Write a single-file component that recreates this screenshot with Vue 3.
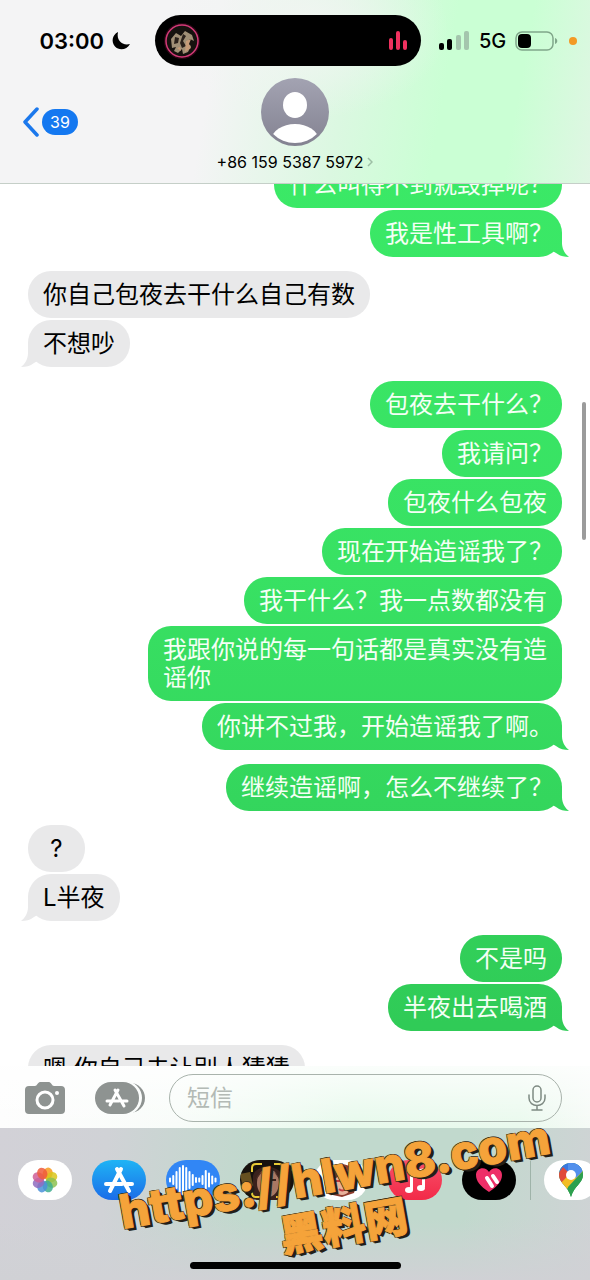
<script setup>
const groups = [
  { side: 'out', items: ['什么叫得不到就毁掉呢？', '我是性工具啊？'] },
  { side: 'in', items: ['你自己包夜去干什么自己有数', '不想吵'] },
  {
    side: 'out',
    items: [
      '包夜去干什么？',
      '我请问？',
      '包夜什么包夜',
      '现在开始造谣我了？',
      '我干什么？我一点数都没有',
      '我跟你说的每一句话都是真实没有造谣你',
      '你讲不过我，开始造谣我了啊。',
    ],
  },
  { side: 'out', items: ['继续造谣啊，怎么不继续了？'] },
  { side: 'in', items: ['?', 'L半夜'] },
  { side: 'out', items: ['不是吗', '半夜出去喝酒'] },
  { side: 'in', items: ['嗯 你自己去让别人猜猜'] },
]
const endsWithMark = (text) => /[？。]$/.test(text)

const petals = ['#f79a1e', '#d9c51c', '#8cc152', '#3fae8f', '#4a90d9', '#8e6cc0', '#cf5f96', '#ee5a3c']
const waves = [3, 8, 16, 24, 28, 24, 16, 10, 4, 3, 8, 18, 13, 7, 3]
</script>

<template>
  <div class="phone">
    <header class="top">
      <div class="status">
        <div class="clock">
          <span>03:00</span>
          <svg width="20" height="20" viewBox="0 0 20 20" aria-hidden="true">
            <path d="M7 1C1 4 0 11 4 15.500C8 20 16 19 19 13C12 15 5 10 7 1Z" />
          </svg>
        </div>
        <div class="island">
          <svg class="cover" width="38" height="38" viewBox="0 0 38 38" aria-hidden="true">
            <circle cx="19" cy="19" r="18" fill="#2a0614" />
            <circle cx="19" cy="19" r="16" fill="#16120f" stroke="#d33a78" stroke-width="1.500" />
            <path d="M8 17l5-6 5 3 4-5 7 4 2 6-4-2-3 4 4 3-3 6-5 2-1-5-4 4-4-2 2-4-4 1z" fill="#a08f76" />
            <path d="M12 15l4 1-1 5-4 1zM20 12l3 2-3 5 3 5-4 2-2-5z" fill="#2b211b" />
            <path d="M23 19l5-2-2 5 2 4-6 4zM14 26l3-1 1 4z" fill="#c69b78" />
          </svg>
          <svg class="bars" width="22" height="22" viewBox="0 0 22 22" aria-hidden="true">
            <path d="M4 10v8M11 3v15M18 12v6" stroke="#f0315f" stroke-width="4" stroke-linecap="round" />
          </svg>
        </div>
        <div class="radio">
          <svg width="31" height="20" viewBox="0 0 31 20" aria-hidden="true">
            <rect x="0" y="12" width="5" height="7" rx="2" />
            <rect x="8" y="8" width="5" height="11" rx="2" />
            <rect x="17" y="4" width="5" height="15" rx="2" fill="#a4c6ad" />
            <rect x="25" y="0" width="5" height="19" rx="2" fill="#a4c6ad" />
          </svg>
          <span>5G</span>
          <svg width="43" height="20" viewBox="0 0 43 20" aria-hidden="true">
            <rect x="1" y="1" width="37" height="18" rx="6" fill="none" stroke="#80a68a" stroke-width="1.500" />
            <rect x="3" y="3" width="13" height="14" rx="4" />
            <path d="M40 7c3 1 3 5 0 6z" fill="#80a68a" />
          </svg>
          <i class="dot"></i>
        </div>
      </div>
      <div class="contact">
        <button class="back" type="button" aria-label="返回，39 条未读">
          <svg width="18" height="30" viewBox="0 0 18 30" aria-hidden="true">
            <path d="M15 2L3 15L15 28" fill="none" stroke="#1b78ec" stroke-width="3.500" stroke-linecap="round" stroke-linejoin="round" />
          </svg>
          <span>39</span>
        </button>
        <button class="person" type="button">
          <svg width="68" height="68" viewBox="0 0 68 68" aria-hidden="true">
            <defs>
              <linearGradient id="face" x1="0" y1="0" x2="0" y2="1">
                <stop offset="0" stop-color="#a3a3b2" />
                <stop offset="1" stop-color="#838291" />
              </linearGradient>
              <clipPath id="disc"><circle cx="34" cy="34" r="31" /></clipPath>
            </defs>
            <circle cx="34" cy="34" r="34" fill="url(#face)" />
            <ellipse cx="34" cy="27" rx="12" ry="13" fill="#fff" />
            <ellipse cx="34" cy="61" rx="23" ry="15" fill="#fff" clip-path="url(#disc)" />
          </svg>
          <span class="number">
            +86 159 5387 5972
            <svg width="6" height="10" viewBox="0 0 6 10" aria-hidden="true">
              <path d="M1 1L5 5L1 9" fill="none" stroke="#9dbfa5" stroke-width="1.500" />
            </svg>
          </span>
        </button>
      </div>
    </header>

    <main class="chat">
      <section v-for="(group, g) in groups" :key="g" class="group" :class="group.side">
        <p v-for="(text, i) in group.items" :key="i" class="bubble" :class="{ mark: endsWithMark(text), tail: i === group.items.length - 1 }">{{ text }}</p>
      </section>
      <div class="scroll"></div>
    </main>

    <form class="composer" @submit.prevent>
      <button type="button" aria-label="相机">
        <svg width="42" height="34" viewBox="0 0 42 34" aria-hidden="true">
          <path d="M5 5h6c2 0 3-4 5-4h9c2 0 3 4 5 4h7a4 4 0 0 1 4 4v20a4 4 0 0 1-4 4H5a4 4 0 0 1-4-4V9a4 4 0 0 1 4-4z" fill="#8e9391" />
          <circle cx="21" cy="19" r="8" fill="none" stroke="#fff" stroke-width="3" />
          <circle cx="33" cy="12" r="2" fill="#fff" />
        </svg>
      </button>
      <button type="button" aria-label="应用">
        <svg width="51" height="34" viewBox="0 0 51 34" aria-hidden="true">
          <rect x="6" y="2" width="44" height="30" rx="15" fill="#8e9391" />
          <rect x="0" y="0" width="47" height="34" rx="17" fill="#fbfdfc" />
          <rect x="0" y="1" width="44" height="32" rx="16" fill="#8e9391" />
          <path d="M23 9L15 24M20 9L29 25M12 20H24M27 20H32" stroke="#fff" stroke-width="3" stroke-linecap="round" />
        </svg>
      </button>
      <label class="field">
        <input type="text" placeholder="短信" aria-label="短信" />
        <svg width="18" height="26" viewBox="0 0 18 26" fill="none" stroke="#7e8a83" stroke-width="1.500" stroke-linecap="round" aria-hidden="true">
          <rect x="5" y="1" width="8" height="16" rx="4" />
          <path d="M1 10v3c0 10 16 10 16 0v-3M9 21v4M4 25h10" />
        </svg>
      </label>
    </form>

    <footer class="dock">
      <nav class="apps">
        <button type="button" class="app white" aria-label="照片">
          <svg width="30" height="30" viewBox="0 0 30 30" aria-hidden="true">
            <ellipse v-for="(c, i) in petals" :key="c" cx="15" cy="8" rx="5" ry="6" :fill="c" fill-opacity="0.850" :transform="`rotate(${i * 45 + 22} 15 15)`" />
          </svg>
        </button>
        <button type="button" class="app store" aria-label="App Store">
          <svg width="32" height="28" viewBox="0 0 32 28" aria-hidden="true">
            <path d="M18 3L7 25M14 3L26 25M3 18H19M24 18H29" stroke="#fff" stroke-width="4" stroke-linecap="round" />
          </svg>
        </button>
        <button type="button" class="app audio" aria-label="音频">
          <svg width="50" height="32" viewBox="0 0 50 32" aria-hidden="true">
            <path v-for="(h, i) in waves" :key="i" :d="`M${i * 3.250 + 2} ${16 - h / 2}v${h}`" stroke="#fff" stroke-width="2" stroke-linecap="round" />
          </svg>
        </button>
        <button type="button" class="app memoji" aria-label="拟我表情">
          <svg width="54" height="40" viewBox="0 0 54 40" aria-hidden="true">
            <path d="M0 14l10-2 4 18-10 3z" fill="#665020" />
            <path d="M13 40V16c2-12 27-12 29 0v24z" fill="#3a211c" />
            <ellipse cx="28" cy="23" rx="11" ry="14" fill="#a97863" />
            <path d="M16 20C17 8 38 8 40 20L34 12H22z" fill="#4b2c24" />
            <path d="M21 20h5M31 20h5M25 30q3 2 6 0" stroke="#3b211c" stroke-width="2" />
            <path d="M12 12V8q0-4 4-4h6M34 4h5q4 0 4 4v4M12 29v4q0 4 4 4h4M36 37h4q3 0 3-4v-4" fill="none" stroke="#e8cb36" stroke-width="2" />
          </svg>
        </button>
        <button type="button" class="app white" aria-label="贴纸">
          <svg width="40" height="36" viewBox="0 0 40 36" aria-hidden="true">
            <path d="M7 32C3 8 10 2 20 2s19 8 13 29l-12 4z" fill="#8f3c2e" />
            <ellipse cx="21" cy="20" rx="10" ry="13" fill="#e8b29c" />
            <path d="M9 20C10 6 30 1 32 20L24 10z" fill="#70392d" />
            <path d="M15 19h4M24 19h4M18 27q3 3 7 0" stroke="#c23d43" stroke-width="2" fill="none" />
          </svg>
        </button>
        <button type="button" class="app music" aria-label="音乐">
          <svg width="30" height="30" viewBox="0 0 30 30" aria-hidden="true">
            <path d="M10 6L25 3V22H22V10L13 12V25H10Z" fill="#fff" />
            <ellipse cx="9" cy="25" rx="4" ry="3" fill="#fff" />
            <ellipse cx="21" cy="23" rx="4" ry="3" fill="#fff" />
          </svg>
        </button>
        <button type="button" class="app touch" aria-label="Digital Touch">
          <svg width="28" height="28" viewBox="0 0 28 28" aria-hidden="true">
            <path d="M14 26C5 20 1 15 1 9C1 1 11 0 14 6C17 0 27 1 27 9C27 15 23 20 14 26Z" fill="#ee2f68" />
            <path d="M12 12L17 20M18 10L22 16" stroke="#fff" stroke-width="4" stroke-linecap="round" />
          </svg>
        </button>
        <i class="rule"></i>
        <button type="button" class="app white" aria-label="地图">
          <svg width="26" height="36" viewBox="0 0 26 36" aria-hidden="true">
            <defs><clipPath id="pin"><path d="M13 1C5 1 1 7 1 13C1 21 10 24 13 35C16 24 25 21 25 13C25 7 21 1 13 1Z" /></clipPath></defs>
            <g clip-path="url(#pin)">
              <rect width="26" height="36" fill="#2da04f" />
              <path d="M0 0H26V5L13 14L5 7L0 12Z" fill="#3a78e0" />
              <path d="M0 12L5 5L13 13L3 24H0Z" fill="#e04a3a" />
              <path d="M2 22L19 4L26 10L8 28Z" fill="#f3bd24" />
              <path d="M10 0H26V8L18 16L10 8Z" fill="#5390ec" />
              <path d="M26 8V36H8L10 25Z" fill="#2da04f" />
            </g>
            <circle cx="13" cy="13" r="5" fill="#fff" />
          </svg>
        </button>
      </nav>
      <div class="home"></div>
      <div class="stamp">
        <span>https://hlwn8.com</span>
        <span class="second">黑料网</span>
      </div>
    </footer>
  </div>
</template>

<style>
body {
  margin: 0;
}
</style>

<style scoped>
.phone {
  height: 100vh;
  display: flex;
  flex-direction: column;
  overflow: hidden;
  background: #fff;
  color: #000;
  font-family: Inter, "Noto Sans CJK SC", sans-serif;
}
button {
  border: 0;
  padding: 0;
  background: none;
  color: inherit;
  font: inherit;
}
svg {
  display: block;
  flex: none;
}
.top {
  flex: none;
  border-bottom: 1px solid #c5cfc8;
  background:
    radial-gradient(ellipse 24% 50% at 52% 15%, #f1f5f2 0%, #f1f5f200 100%),
    linear-gradient(100deg, #f4f4f5 0%, #f4f4f5 36%, #dbf8e1 58%, #caffd4 74%, #caffd4 86%, #e0f6e4 100%);
}
.status {
  display: grid;
  grid-template-columns: minmax(0, 155fr) 266px minmax(0, 169fr);
  align-items: center;
  padding-top: 15px;
}
.clock {
  display: flex;
  align-items: center;
  justify-content: flex-end;
  gap: 7px;
  padding-right: 24px;
  font-size: 22px;
  font-weight: 600;
}
.island {
  display: flex;
  align-items: center;
  justify-content: space-between;
  height: 51px;
  padding: 0 12px 0 8px;
  box-sizing: border-box;
  border-radius: 26px;
  background: #000;
}
.radio {
  display: flex;
  align-items: center;
  gap: 9px;
  padding-left: 18px;
  font-size: 20px;
  font-weight: 500;
}
.dot {
  flex: none;
  width: 8px;
  height: 8px;
  margin-left: 2px;
  border-radius: 50%;
  background: #f39a25;
}
.contact {
  display: grid;
  grid-template-columns: 1fr auto 1fr;
  padding: 12px 0 11px;
}
.back {
  justify-self: start;
  align-self: start;
  display: flex;
  align-items: center;
  gap: 2px;
  margin: 29px 0 0 22px;
}
.back span {
  padding: 0 8px;
  border-radius: 13px;
  background: #1478f0;
  color: #fff;
  font-size: 16px;
  line-height: 26px;
}
.person {
  display: flex;
  flex-direction: column;
  align-items: center;
  gap: 6px;
}
.number {
  display: flex;
  align-items: center;
  gap: 4px;
  font-size: 16px;
  line-height: 20px;
}
.chat {
  position: relative;
  flex: 1;
  min-height: 0;
  overflow: hidden;
  display: flex;
  flex-direction: column;
  gap: 14px;
  padding: 0 28px;
}
.group {
  flex: none;
  display: flex;
  flex-direction: column;
  gap: 2px;
}
.group:first-child {
  margin-top: -23px;
}
.in {
  align-items: flex-start;
}
.out {
  align-items: flex-end;
}
.bubble {
  position: relative;
  box-sizing: border-box;
  min-width: 57px;
  max-width: 414px;
  margin: 0;
  padding: 10px 15px 9px;
  border-radius: 23px;
  background: #e9e9ea;
  font-size: 24px;
  line-height: 28px;
  text-align: center;
}
.out .bubble {
  background: linear-gradient(#3cec68, #38e163 45%, #30cb57 80%, #30c856) fixed;
  color: #f4fff5;
  text-align: left;
}
.out .mark {
  padding-right: 9px;
}
.tail::after {
  content: "";
  position: absolute;
  bottom: 0;
  right: -7px;
  width: 20px;
  height: 24px;
  background: inherit;
  clip-path: path("M13 0V10C13 16 16 21 20 24C15 24 11 23 7 20L0 16V0Z");
}
.in .tail::after {
  right: auto;
  left: -7px;
  clip-path: path("M7 0V10C7 16 4 21 0 24C5 24 9 23 13 20L20 16V0Z");
}
.scroll {
  position: absolute;
  top: 218px;
  right: 4px;
  width: 4px;
  height: 138px;
  border-radius: 2px;
  background: #9b9b9b;
}
.composer {
  flex: none;
  display: flex;
  align-items: center;
  padding: 8px 28px 6px 24px;
  background:
    linear-gradient(#ffffffcc, #ffffff00),
    linear-gradient(90deg, #fdfdfd 0%, #f8fcf9 30%, #e6f9eb 60%, #e9f9ed 88%, #f5faf6 100%);
}
.composer button + button {
  margin-left: 29px;
}
.field {
  flex: 1;
  min-width: 0;
  display: flex;
  align-items: center;
  height: 46px;
  margin-left: 23px;
  padding: 0 15px 0 17px;
  border: 1px solid #a9b3ac;
  border-radius: 24px;
}
.field input {
  flex: 1;
  min-width: 0;
  border: 0;
  padding: 0;
  outline: 0;
  background: none;
  font: inherit;
  font-size: 23px;
}
.field input::placeholder {
  color: #b3bab5;
  opacity: 1;
}
.dock {
  position: relative;
  flex: none;
  height: 152px;
  background:
    linear-gradient(#d0d1d500 60%, #d0d1d5 100%),
    linear-gradient(95deg, #d2d1d7 0%, #d0d2d6 18%, #c1d9cd 42%, #c1d9cd 78%, #cfd3d5 100%);
}
.apps {
  display: flex;
  gap: 20px;
  padding: 32px 0 0 18px;
  overflow: hidden;
}
.app {
  flex: none;
  display: flex;
  align-items: center;
  justify-content: center;
  width: 54px;
  height: 40px;
  border-radius: 20px;
  overflow: hidden;
}
.white {
  background: #fff;
}
.store {
  background: linear-gradient(#1fb4f5, #1b6ce8);
}
.audio {
  background: #3186f5;
}
.memoji {
  background: #17120e;
}
.music {
  background: linear-gradient(#f9506a, #f22a48);
}
.touch {
  background: #000;
}
.rule {
  flex: none;
  width: 1px;
  margin: 1px -7px 0 -6px;
  background: #9fb3a9;
}
.home {
  width: 211px;
  height: 7px;
  margin: 62px auto 0;
  border-radius: 4px;
  background: #000;
}
.stamp {
  position: absolute;
  top: 20px;
  left: 121px;
  display: flex;
  flex-direction: column;
  align-items: center;
  transform: rotate(-10deg);
  color: #f5a33a;
  font-size: 47px;
  font-weight: 800;
  line-height: 52px;
  white-space: nowrap;
  -webkit-text-stroke: 1px #f5a33a;
  text-shadow: -1px -1px 0 #3a2d18, 1px -1px 0 #3a2d18, -1px 1px 0 #3a2d18, 1px 1px 0 #231f18, 2px 2px 0 #231f18, 3px 3px 0 #231f18;
  pointer-events: none;
}
.second {
  font-size: 43px;
}
</style>
